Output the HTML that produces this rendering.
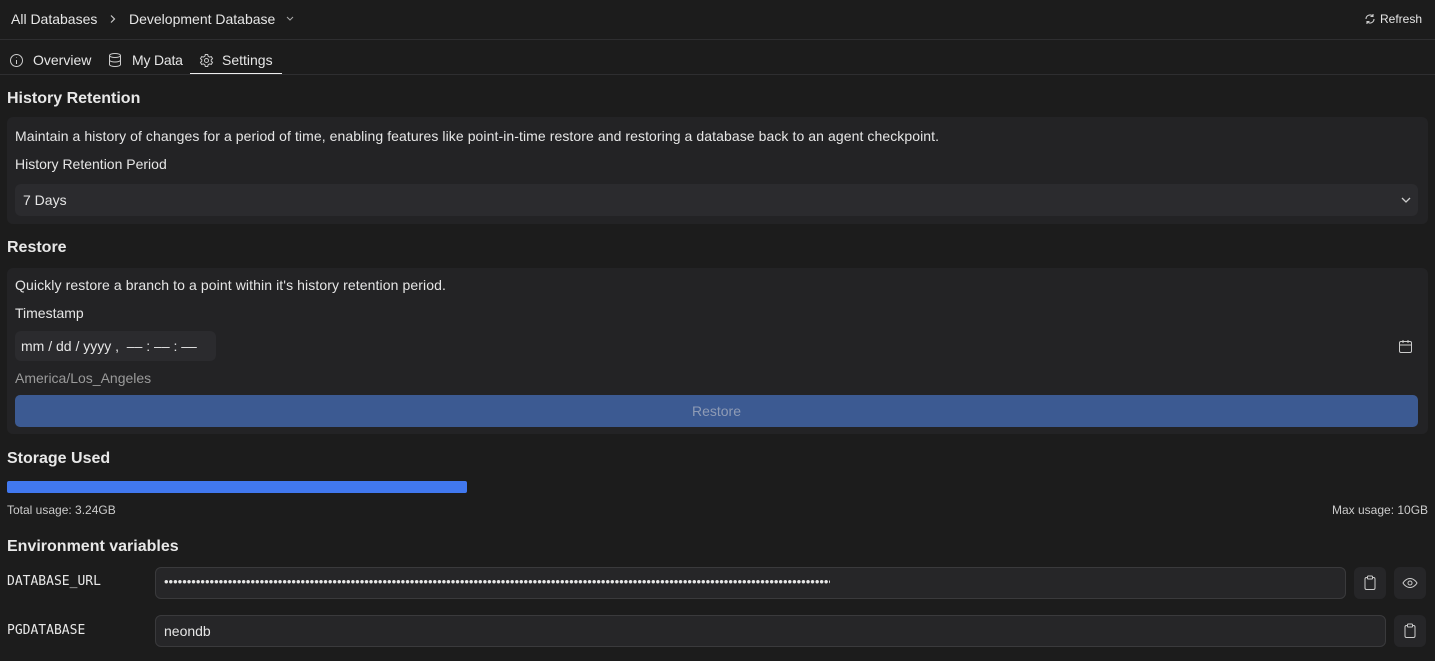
<!DOCTYPE html>
<html><head><style>
*{box-sizing:border-box;margin:0;padding:0}
body{width:1435px;height:661px;overflow:hidden;background:#1c1c1c;color:#e6e6e6;font-family:"Liberation Sans",sans-serif;font-size:14px;position:relative}
.a{position:absolute;white-space:nowrap}
.h{font-weight:bold;font-size:16px;color:#e8e8e8}
.panel{position:absolute;left:7px;width:1421px;background:#232325;border-radius:6px}
.in{position:absolute;background:#2b2b2e;border-radius:6px}
.btn{position:absolute;background:#262628;border-radius:6px;width:32px;height:32px}
.mono{font-family:"DejaVu Sans Mono",monospace;font-size:13px;color:#e8e8e8}
svg{position:absolute}
</style></head><body>
<div class="a" style="left:11px;top:11px">All Databases</div>
<svg style="left:109px;top:14px" width="8" height="10" viewBox="0 0 8 10"><path d="M2 1.5l3.5 3.5L2 8.5" stroke="#ccc" fill="none" stroke-width="1.2"/></svg>
<div class="a" style="left:129px;top:11px">Development Database</div>
<svg style="left:285px;top:15px" width="10" height="8" viewBox="0 0 10 8"><path d="M2 2l3 3 3-3" stroke="#aaa" fill="none"/></svg>
<svg style="left:1364px;top:13px" width="12" height="12" viewBox="0 0 12 12"><path d="M10 6a4 4 0 0 1-7 2.6M2 6a4 4 0 0 1 7-2.6M9 1v2.5H6.5M3 11V8.5h2.5" stroke="#ccc" fill="none" stroke-width="1.1"/></svg>
<div class="a" style="left:1380px;top:12px;font-size:12px">Refresh</div>
<div class="a" style="left:0;top:39px;width:1435px;height:1px;background:#2e2e30"></div>
<svg style="left:9px;top:53px" width="15" height="15" viewBox="0 0 15 15"><circle cx="7.5" cy="7.5" r="6" stroke="#ccc" fill="none"/><path d="M7.5 7v4M7.5 4.5v.5" stroke="#ccc"/></svg>
<div class="a" style="left:33px;top:52px">Overview</div>
<svg style="left:108px;top:52px" width="14" height="16" viewBox="0 0 14 16"><ellipse cx="7" cy="3.5" rx="5.5" ry="2" stroke="#ccc" fill="none"/><path d="M1.5 3.5v9c0 1.1 2.5 2 5.5 2s5.5-.9 5.5-2v-9M1.5 8c0 1.1 2.5 2 5.5 2s5.5-.9 5.5-2" stroke="#ccc" fill="none"/></svg>
<div class="a" style="left:132px;top:52px;letter-spacing:-0.2px">My Data</div>
<svg style="left:199px;top:53px" width="15" height="15" viewBox="0 0 15 15"><circle cx="7.5" cy="7.5" r="2" stroke="#ccc" fill="none"/><path d="M6.3 1.5h2.4l.4 1.7 1.5.9 1.7-.5 1.2 2.1-1.3 1.2v1.2l1.3 1.2-1.2 2.1-1.7-.5-1.5.9-.4 1.7H6.3l-.4-1.7-1.5-.9-1.7.5-1.2-2.1 1.3-1.2V6.9L1.5 5.7l1.2-2.1 1.7.5 1.5-.9z" stroke="#ccc" fill="none"/></svg>
<div class="a" style="left:222px;top:52px">Settings</div>
<div class="a" style="left:190px;top:73px;width:92px;height:2px;background:#eee"></div>
<div class="a" style="left:0;top:74px;width:1435px;height:1px;background:#2e2e30"></div>

<div class="a h" style="left:7px;top:90px">History Retention</div>
<div class="panel" style="top:117px;height:107px"></div>
<div class="a" style="left:15px;top:128px;letter-spacing:0.08px">Maintain a history of changes for a period of time, enabling features like point-in-time restore and restoring a database back to an agent checkpoint.</div>
<div class="a" style="left:15px;top:156px">History Retention Period</div>
<div class="in" style="left:15px;top:184px;width:1403px;height:32px"></div>
<div class="a" style="left:23px;top:192px">7 Days</div>
<svg style="left:1400px;top:195px" width="12" height="10" viewBox="0 0 12 10"><path d="M2 3l4 4 4-4" stroke="#ccc" fill="none" stroke-width="1.3"/></svg>

<div class="a h" style="left:7px;top:239px">Restore</div>
<div class="panel" style="top:268px;height:166px"></div>
<div class="a" style="left:15px;top:277px;letter-spacing:0.1px">Quickly restore a branch to a point within it's history retention period.</div>
<div class="a" style="left:15px;top:305px">Timestamp</div>
<div class="in" style="left:15px;top:331px;width:201px;height:30px"></div>
<div class="a" style="left:21px;top:338px">mm / dd / yyyy ,&nbsp; –– : –– : ––</div>
<svg style="left:1398px;top:339px" width="15" height="15" viewBox="0 0 15 15"><rect x="1.5" y="2.5" width="12" height="11" rx="1.5" stroke="#ccc" fill="none"/><path d="M1.5 6h12M5 1v3M10 1v3" stroke="#ccc"/></svg>
<div class="a" style="left:15px;top:370px;color:#9a9a9a">America/Los_Angeles</div>
<div class="a" style="left:15px;top:395px;width:1403px;height:32px;background:#3c5a92;border-radius:5px;text-align:center;line-height:32px;color:#8e9bb5">Restore</div>

<div class="a h" style="left:7px;top:450px">Storage Used</div>
<div class="a" style="left:7px;top:481px;width:460px;height:12px;background:#4178ef;border-radius:2px"></div>
<div class="a" style="left:7px;top:503px;font-size:12px;color:#ccc">Total usage: 3.24GB</div>
<div class="a" style="left:1332px;top:503px;font-size:12px;color:#ccc">Max usage: 10GB</div>

<div class="a h" style="left:7px;top:538px">Environment variables</div>
<div class="a mono" style="left:7px;top:574px">DATABASE_URL</div>
<div class="in" style="left:155px;top:567px;width:1191px;height:32px;background:#262628;border:1px solid #3a3a3c"></div>
<div class="a" style="left:164px;top:574px;width:666px;overflow:hidden;font-size:13px;line-height:16px">••••••••••••••••••••••••••••••••••••••••••••••••••••••••••••••••••••••••••••••••••••••••••••••••••••••••••••••••••••••••••••••••••••••••••••••••••••••</div>
<div class="btn" style="left:1354px;top:567px"></div>
<svg style="left:1363px;top:575px" width="14" height="16" viewBox="0 0 14 16"><rect x="2" y="2.5" width="10" height="12" rx="1.5" stroke="#ccc" fill="none"/><rect x="4.5" y="1" width="5" height="3" rx=".8" stroke="#ccc" fill="#262628"/></svg>
<div class="btn" style="left:1394px;top:567px"></div>
<svg style="left:1402px;top:577px" width="16" height="12" viewBox="0 0 16 12"><path d="M1 6s2.5-4.5 7-4.5S15 6 15 6s-2.5 4.5-7 4.5S1 6 1 6z" stroke="#ccc" fill="none"/><circle cx="8" cy="6" r="2" stroke="#ccc" fill="none"/></svg>

<div class="a mono" style="left:7px;top:623px">PGDATABASE</div>
<div class="in" style="left:155px;top:615px;width:1231px;height:32px;background:#262628;border:1px solid #3a3a3c"></div>
<div class="a" style="left:164px;top:623px">neondb</div>
<div class="btn" style="left:1394px;top:615px"></div>
<svg style="left:1403px;top:623px" width="14" height="16" viewBox="0 0 14 16"><rect x="2" y="2.5" width="10" height="12" rx="1.5" stroke="#ccc" fill="none"/><rect x="4.5" y="1" width="5" height="3" rx=".8" stroke="#ccc" fill="#262628"/></svg>
</body></html>
